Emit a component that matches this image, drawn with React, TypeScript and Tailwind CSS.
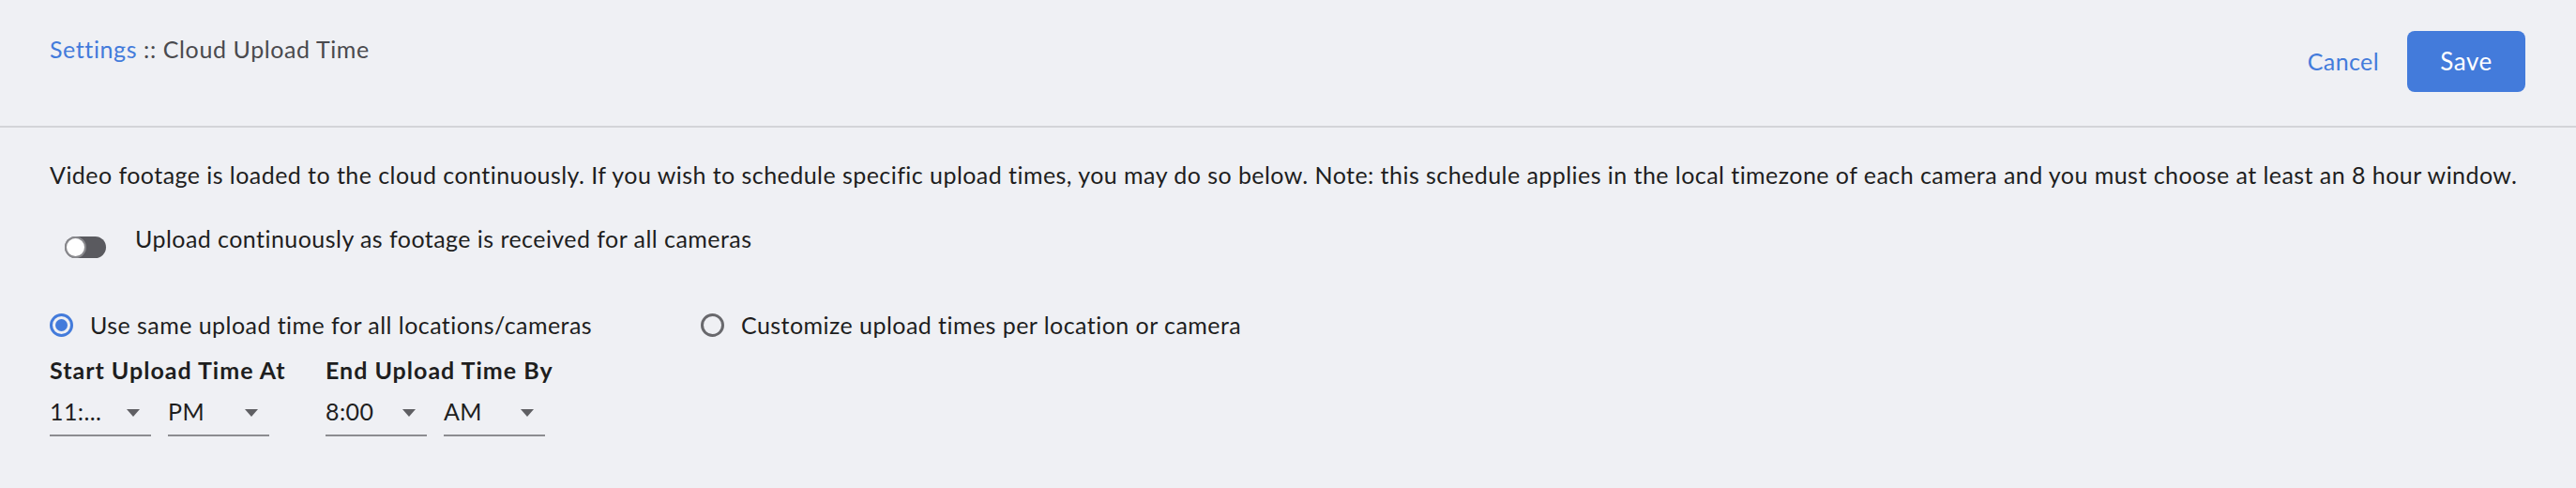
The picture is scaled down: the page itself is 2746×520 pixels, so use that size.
import React from "react";

function Select({ value }: { value: string }) {
  return (
    <div className="flex h-[55px] w-[108px] items-center justify-between border-b-2 border-[#8c8c90] pr-[12px] pt-[4px]">
      <span className="text-[25px] tracking-[0.4px] text-[#1e1e1e]">{value}</span>
      <svg width="14" height="8" viewBox="0 0 14 8" className="mt-[2px]">
        <path d="M0 0 L14 0 L7 8 Z" fill="#5f5f63" />
      </svg>
    </div>
  );
}

function Radio({ checked, label }: { checked: boolean; label: string }) {
  return (
    <label className="flex items-center gap-[18px]">
      <span
        className={
          checked
            ? "flex h-[25px] w-[25px] items-center justify-center rounded-full border-[3px] border-[#437bdb]"
            : "flex h-[25px] w-[25px] items-center justify-center rounded-full border-[3px] border-[#68686c]"
        }
      >
        {checked && <span className="h-[13px] w-[13px] rounded-full bg-[#437bdb]" />}
      </span>
      <span className="text-[25px] leading-[32px] tracking-[0.45px] text-[#1e1e1e]">{label}</span>
    </label>
  );
}

export default function App() {
  return (
    <div
      className="h-[520px] w-full bg-[#eff0f4] text-[#1e1e1e]"
      style={{ fontFamily: "Lato, 'Open Sans', sans-serif" }}
    >
      <header className="flex h-[136px] items-start justify-between border-b-2 border-[#d3d4d8] pl-[53px] pr-[54px]">
        <div className="pt-[36px] text-[25px] leading-[32px] tracking-[0.6px]">
          <span className="text-[#437bdb]">Settings</span>
          <span className="text-[#4a4a4e]"> :: Cloud Upload Time</span>
        </div>
        <div className="flex items-center gap-[30px] pt-[33px]">
          <button className="text-[25px] tracking-[0.4px] text-[#437bdb]">Cancel</button>
          <button className="h-[65px] w-[126px] rounded-[8px] bg-[#437bdb] text-[26px] tracking-[0.5px] text-white">
            Save
          </button>
        </div>
      </header>

      <main className="px-[53px]">
        <p className="pt-[34px] text-[25px] leading-[32px] tracking-[0.45px]">
          Video footage is loaded to the cloud continuously. If you wish to schedule specific upload times, you may do so below. Note: this schedule applies in the local timezone of each camera and you must choose at least an 8 hour window.
        </p>

        <div className="mt-[36px] flex items-start">
          <div className="ml-[16px] mt-[14px] flex h-[23px] w-[44px] items-center rounded-full bg-[#5a5a5f]">
            <span className="h-[23px] w-[23px] rounded-full border-2 border-[#8a8a8e] bg-white" />
          </div>
          <span className="ml-[31px] text-[25px] leading-[32px] tracking-[0.45px]">
            Upload continuously as footage is received for all cameras
          </span>
        </div>

        <div className="mt-[55px] flex items-center">
          <div className="w-[694px]">
            <Radio checked label="Use same upload time for all locations/cameras" />
          </div>
          <Radio checked={false} label="Customize upload times per location or camera" />
        </div>

        <div className="mt-[16px] flex">
          <div className="w-[294px]">
            <div className="text-[25px] font-bold leading-[32px] tracking-[1px]">Start Upload Time At</div>
            <div className="flex gap-[18px]">
              <Select value="11:..." />
              <Select value="PM" />
            </div>
          </div>
          <div>
            <div className="text-[25px] font-bold leading-[32px] tracking-[1px]">End Upload Time By</div>
            <div className="flex gap-[18px]">
              <Select value="8:00" />
              <Select value="AM" />
            </div>
          </div>
        </div>
      </main>
    </div>
  );
}
